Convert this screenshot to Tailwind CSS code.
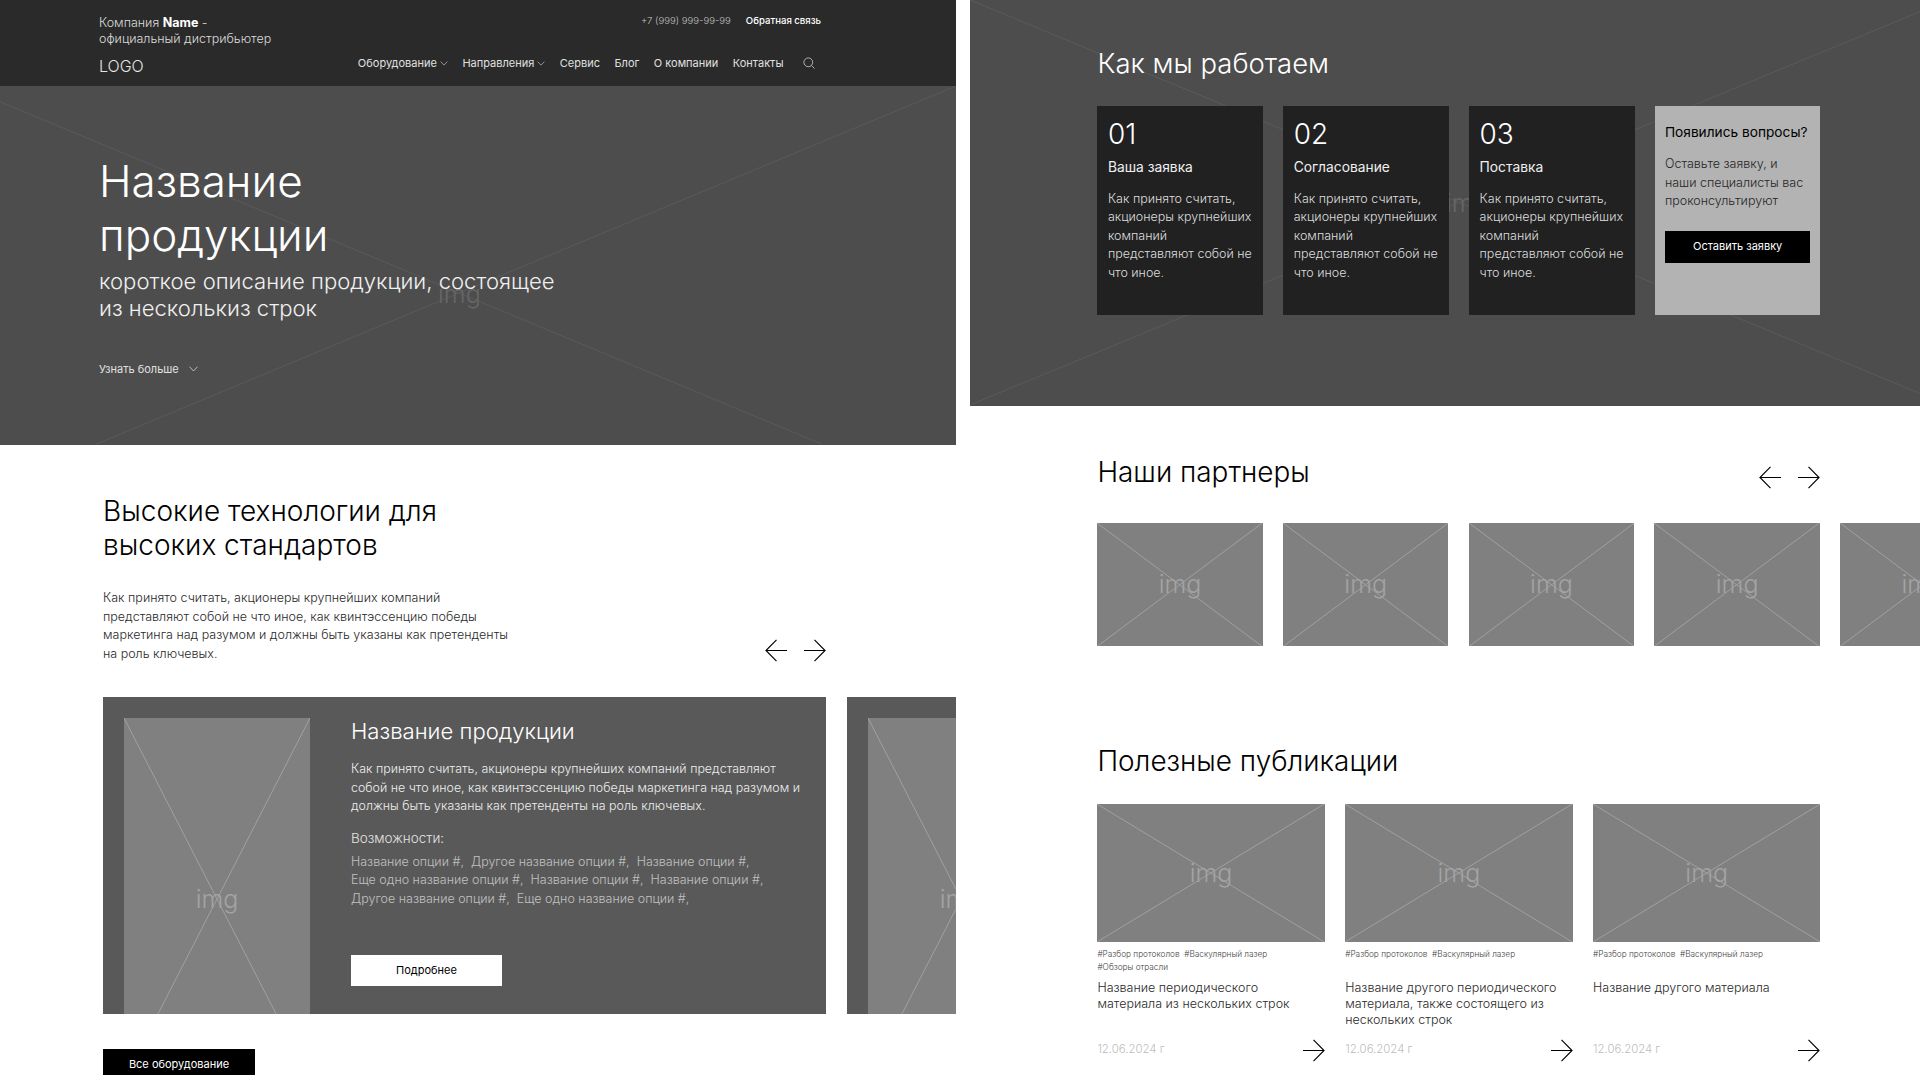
<!DOCTYPE html>
<html lang="ru"><head><meta charset="utf-8">
<script src="https://cdn.jsdelivr.net/npm/@tailwindcss/browser@4"></script>
</head>
<body class="bg-white">
<div class="w-[1920px] h-[1075px] overflow-hidden flex gap-[14px] font-['Inter',sans-serif] font-light text-black">

<!-- LEFT -->
<div class="w-[956px] h-[1075px] overflow-hidden shrink-0">
  <header class="h-[86px] bg-[#2a2a2a] pl-[99px] pr-[135px] text-white">
    <div class="flex justify-between pt-[15px]">
      <div class="text-[12.5px] leading-[15.5px] text-[#dcdcdc]">Компания <b class="font-bold text-white">Name</b> -<br>официальный дистрибьютер</div>
      <div class="flex gap-[15px] text-[9.6px] leading-[11px] pt-[0px]"><span class="text-[#c4c4c4]">+7 (999) 999-99-99</span><span class="font-medium text-white">Обратная связь</span></div>
    </div>
    <div class="flex justify-between items-center mt-[5px] h-[24px]">
      <div class="text-[16px] leading-[20px] text-[#e4e4e4] pt-[5px]">LOGO</div>
      <nav class="flex items-center text-[11px] leading-[14px] text-[#e0e0e0] font-normal gap-[14.5px] pr-[6px]">
        <span class="flex items-center gap-[3px]">Оборудование<svg class="w-[8px] h-[5px]" viewBox="0 0 9 6" fill="none" stroke="#c8c8c8" stroke-width="0.8"><path d="M.5 .7 4.5 5 8.5 .7"/></svg></span>
        <span class="flex items-center gap-[3px]">Направления<svg class="w-[8px] h-[5px]" viewBox="0 0 9 6" fill="none" stroke="#c8c8c8" stroke-width="0.8"><path d="M.5 .7 4.5 5 8.5 .7"/></svg></span>
        <span>Сервис</span><span>Блог</span><span>О компании</span><span>Контакты</span>
        <svg class="w-[12px] h-[12px] ml-[5px]" viewBox="0 0 12 12" fill="none" stroke="#d0d0d0" stroke-width="0.8"><circle cx="5.3" cy="5.3" r="4.4"/><path d="M8.5 8.5 11.5 11.5"/></svg>
      </nav>
    </div>
  </header>

  <section class="relative h-[358.5px] bg-[#4d4d4d] overflow-hidden pl-[99px] pt-[68px] text-white">
    <svg class="absolute inset-0 w-[956px] h-[358px]" viewBox="0 0 956 358" fill="none" stroke="#5a5a5a" stroke-width="1"><path d="M-38 0 956 414M956 0-38 414"/></svg>
    <span class="absolute left-[438px] top-[193px] text-[25px] leading-[30px] text-[#666]">img</span>
    <div class="relative">
      <h1 class="text-[44px] leading-[54px] font-light">Название<br>продукции</h1>
      <p class="text-[22.1px] leading-[27px] mt-[6px] text-[#f0f0f0]">короткое описание продукции, состоящее<br>из несколькиз строк</p>
      <div class="flex items-center gap-[10px] mt-[39px] text-[11px] leading-[16px] font-normal text-[#e0e0e0]">Узнать больше<svg class="w-[9px] h-[6px]" viewBox="0 0 9 6" fill="none" stroke="#d8d8d8" stroke-width="0.8"><path d="M.5 .7 4.5 5 8.5 .7"/></svg></div>
    </div>
  </section>

  <section class="pl-[103px] pt-[49.5px]">
    <div class="w-[723px] flex justify-between items-end">
      <div>
        <h2 class="text-[28px] leading-[34px]">Высокие технологии для<br>высоких стандартов</h2>
        <p class="mt-[27px] text-[12.5px] leading-[18.5px] text-[#2a2a2a]">Как принято считать, акционеры крупнейших компаний<br>представляют собой не что иное, как квинтэссенцию победы<br>маркетинга над разумом и должны быть указаны как претенденты<br>на роль ключевых.</p>
      </div>
      <div class="flex gap-[15px] mb-[1px]">
        <svg class="w-[23px] h-[23px]" viewBox="0 0 24 24" fill="none" stroke="#000" stroke-width="1.2"><path d="M23 12H1M12 1 1 12 12 23"/></svg>
        <svg class="w-[23px] h-[23px]" viewBox="0 0 24 24" fill="none" stroke="#000" stroke-width="1.2"><path d="M1 12H23M12 1 23 12 12 23"/></svg>
      </div>
    </div>
    <div class="flex gap-[21px] mt-[34px] w-[900px]">
      <article class="w-[723px] h-[316.5px] shrink-0 bg-[#595959] overflow-hidden flex pl-[21px] pt-[21px] gap-[41px] text-white">
        <div class="relative w-[186px] h-[362px] shrink-0 bg-[#808080] flex items-center justify-center">
          <svg class="absolute inset-0 w-full h-full" viewBox="0 0 100 100" preserveAspectRatio="none" fill="none" stroke="#a0a0a0"><path vector-effect="non-scaling-stroke" d="M0 0 100 100M100 0 0 100"/></svg>
          <span class="relative text-[25px] leading-[30px] text-[#a3a3a3]">img</span>
        </div>
        <div class="w-[330px] grow pr-[20px]">
          <h3 class="text-[22.1px] leading-[27px]">Название продукции</h3>
          <p class="mt-[15px] text-[12.45px] leading-[18.5px] text-[#eee]">Как принято считать, акционеры крупнейших компаний представляют<br>собой не что иное, как квинтэссенцию победы маркетинга над разумом и<br>должны быть указаны как претенденты на роль ключевых.</p>
          <div class="mt-[13px] text-[13.5px] leading-[18px] text-[#e4e4e4]">Возможности:</div>
          <p class="mt-[6px] text-[12.5px] leading-[18.5px] text-[#c0c0c0]">Название опции #,&nbsp; Другое название опции #,&nbsp; Название опции #,<br>Еще одно название опции #,&nbsp; Название опции #,&nbsp; Название опции #,<br>Другое название опции #,&nbsp; Еще одно название опции #,</p>
          <button class="block mt-[47px] w-[151px] h-[31px] bg-white text-black text-[11px] font-normal">Подробнее</button>
        </div>
      </article>
      <article class="w-[723px] h-[316.5px] shrink-0 bg-[#595959] overflow-hidden pl-[21px] pt-[21px]">
        <div class="relative w-[186px] h-[362px] bg-[#808080] flex items-center justify-center">
          <svg class="absolute inset-0 w-full h-full" viewBox="0 0 100 100" preserveAspectRatio="none" fill="none" stroke="#a0a0a0"><path vector-effect="non-scaling-stroke" d="M0 0 100 100M100 0 0 100"/></svg>
          <span class="relative text-[25px] leading-[30px] text-[#a3a3a3]">img</span>
        </div>
      </article>
    </div>
    <button class="block mt-[35px] w-[152px] h-[32px] bg-black text-white text-[11px] font-normal">Все оборудование</button>
  </section>
</div>

<!-- RIGHT -->
<div class="w-[950px] h-[1075px] overflow-hidden shrink-0">
  <section class="relative h-[405.5px] bg-[#4d4d4d] overflow-hidden pl-[127.4px] pt-[46px] text-white">
    <svg class="absolute inset-0 w-[950px] h-[405px]" viewBox="0 0 950 405" fill="none" stroke="#5a5a5a" stroke-width="1"><path d="M0 0 978 405M978 0 0 405"/></svg>
    <span class="absolute left-[476px] top-[188px] text-[25px] leading-[30px] text-[#666]">img</span>
    <div class="relative">
      <h2 class="text-[27.5px] leading-[34px]">Как мы работаем</h2>
      <div class="grid grid-cols-4 gap-[20.4px] w-[723px] h-[209px] mt-[26px]">
        <div class="bg-[#212121] px-[10.5px] pt-[13px]">
          <div class="text-[28px] leading-[30px]">01</div>
          <div class="mt-[9px] text-[13.8px] leading-[18px] font-normal text-[#f0f0f0]">Ваша заявка</div>
          <p class="mt-[13.5px] text-[12.5px] leading-[18.5px] text-[#ddd]">Как принято считать, акционеры крупнейших компаний представляют собой не что иное.</p>
        </div>
        <div class="bg-[#212121] px-[10.5px] pt-[13px]">
          <div class="text-[28px] leading-[30px]">02</div>
          <div class="mt-[9px] text-[13.8px] leading-[18px] font-normal text-[#f0f0f0]">Согласование</div>
          <p class="mt-[13.5px] text-[12.5px] leading-[18.5px] text-[#ddd]">Как принято считать, акционеры крупнейших компаний представляют собой не что иное.</p>
        </div>
        <div class="bg-[#212121] px-[10.5px] pt-[13px]">
          <div class="text-[28px] leading-[30px]">03</div>
          <div class="mt-[9px] text-[13.8px] leading-[18px] font-normal text-[#f0f0f0]">Поставка</div>
          <p class="mt-[13.5px] text-[12.5px] leading-[18.5px] text-[#ddd]">Как принято считать, акционеры крупнейших компаний представляют собой не что иное.</p>
        </div>
        <div class="bg-[#b3b3b3] px-[10px] pt-[17px] text-black">
          <div class="text-[13.7px] leading-[18px] font-normal whitespace-nowrap">Появились вопросы?</div>
          <p class="mt-[14px] text-[12.5px] leading-[18.5px] text-[#262626]">Оставьте заявку, и наши специалисты вас проконсультируют</p>
          <button class="block mt-[20px] w-full h-[32px] bg-black text-white text-[11px] font-normal">Оставить заявку</button>
        </div>
      </div>
    </div>
  </section>

  <section class="pl-[127.4px] pt-[49px]">
    <div class="w-[723px] flex justify-between items-end">
      <h2 class="text-[27.9px] leading-[34px]">Наши партнеры</h2>
      <div class="flex gap-[15px]">
        <svg class="w-[23px] h-[23px]" viewBox="0 0 24 24" fill="none" stroke="#000" stroke-width="1.2"><path d="M23 12H1M12 1 1 12 12 23"/></svg>
        <svg class="w-[23px] h-[23px]" viewBox="0 0 24 24" fill="none" stroke="#000" stroke-width="1.2"><path d="M1 12H23M12 1 23 12 12 23"/></svg>
      </div>
    </div>
    <div class="flex gap-[20.4px] mt-[34px] w-[900px]">
      <div class="relative w-[165.3px] h-[123.5px] shrink-0 bg-[#808080] flex items-center justify-center"><svg class="absolute inset-0 w-full h-full" viewBox="0 0 100 100" preserveAspectRatio="none" fill="none" stroke="#a0a0a0"><path vector-effect="non-scaling-stroke" d="M0 0 100 100M100 0 0 100"/></svg><span class="relative text-[25px] leading-[30px] text-[#a3a3a3]">img</span></div>
      <div class="relative w-[165.3px] h-[123.5px] shrink-0 bg-[#808080] flex items-center justify-center"><svg class="absolute inset-0 w-full h-full" viewBox="0 0 100 100" preserveAspectRatio="none" fill="none" stroke="#a0a0a0"><path vector-effect="non-scaling-stroke" d="M0 0 100 100M100 0 0 100"/></svg><span class="relative text-[25px] leading-[30px] text-[#a3a3a3]">img</span></div>
      <div class="relative w-[165.3px] h-[123.5px] shrink-0 bg-[#808080] flex items-center justify-center"><svg class="absolute inset-0 w-full h-full" viewBox="0 0 100 100" preserveAspectRatio="none" fill="none" stroke="#a0a0a0"><path vector-effect="non-scaling-stroke" d="M0 0 100 100M100 0 0 100"/></svg><span class="relative text-[25px] leading-[30px] text-[#a3a3a3]">img</span></div>
      <div class="relative w-[165.3px] h-[123.5px] shrink-0 bg-[#808080] flex items-center justify-center"><svg class="absolute inset-0 w-full h-full" viewBox="0 0 100 100" preserveAspectRatio="none" fill="none" stroke="#a0a0a0"><path vector-effect="non-scaling-stroke" d="M0 0 100 100M100 0 0 100"/></svg><span class="relative text-[25px] leading-[30px] text-[#a3a3a3]">img</span></div>
      <div class="relative w-[165.3px] h-[123.5px] shrink-0 bg-[#808080] flex items-center justify-center"><svg class="absolute inset-0 w-full h-full" viewBox="0 0 100 100" preserveAspectRatio="none" fill="none" stroke="#a0a0a0"><path vector-effect="non-scaling-stroke" d="M0 0 100 100M100 0 0 100"/></svg><span class="relative text-[25px] leading-[30px] text-[#a3a3a3]">img</span></div>
    </div>

    <h2 class="mt-[97.5px] text-[27.9px] leading-[34px]">Полезные публикации</h2>
    <div class="grid grid-cols-3 gap-[20.5px] w-[723px] mt-[26px]">
      <article>
        <div class="relative h-[138px] bg-[#808080] flex items-center justify-center"><svg class="absolute inset-0 w-full h-full" viewBox="0 0 100 100" preserveAspectRatio="none" fill="none" stroke="#a0a0a0"><path vector-effect="non-scaling-stroke" d="M0 0 100 100M100 0 0 100"/></svg><span class="relative text-[25px] leading-[30px] text-[#a3a3a3]">img</span></div>
        <div class="mt-[6.5px] h-[25px] text-[8.25px] leading-[12.5px] text-[#444]">#Разбор протоколов&nbsp; #Васкулярный лазер<br>#Обзоры отрасли</div>
        <div class="mt-[7px] h-[48px] text-[12.5px] leading-[16px] text-[#2a2a2a]">Название периодического<br>материала из нескольких строк</div>
        <div class="mt-[10.5px] flex justify-between items-center"><span class="text-[11.4px] text-[#bdbdbd]">12.06.2024 г</span><svg class="w-[23px] h-[23px]" viewBox="0 0 24 24" fill="none" stroke="#000" stroke-width="1.2"><path d="M1 12H23M12 1 23 12 12 23"/></svg></div>
      </article>
      <article>
        <div class="relative h-[138px] bg-[#808080] flex items-center justify-center"><svg class="absolute inset-0 w-full h-full" viewBox="0 0 100 100" preserveAspectRatio="none" fill="none" stroke="#a0a0a0"><path vector-effect="non-scaling-stroke" d="M0 0 100 100M100 0 0 100"/></svg><span class="relative text-[25px] leading-[30px] text-[#a3a3a3]">img</span></div>
        <div class="mt-[6.5px] h-[25px] text-[8.25px] leading-[12.5px] text-[#444]">#Разбор протоколов&nbsp; #Васкулярный лазер</div>
        <div class="mt-[7px] h-[48px] text-[12.5px] leading-[16px] text-[#2a2a2a]">Название другого периодического<br>материала, также состоящего из<br>нескольких строк</div>
        <div class="mt-[10.5px] flex justify-between items-center"><span class="text-[11.4px] text-[#bdbdbd]">12.06.2024 г</span><svg class="w-[23px] h-[23px]" viewBox="0 0 24 24" fill="none" stroke="#000" stroke-width="1.2"><path d="M1 12H23M12 1 23 12 12 23"/></svg></div>
      </article>
      <article>
        <div class="relative h-[138px] bg-[#808080] flex items-center justify-center"><svg class="absolute inset-0 w-full h-full" viewBox="0 0 100 100" preserveAspectRatio="none" fill="none" stroke="#a0a0a0"><path vector-effect="non-scaling-stroke" d="M0 0 100 100M100 0 0 100"/></svg><span class="relative text-[25px] leading-[30px] text-[#a3a3a3]">img</span></div>
        <div class="mt-[6.5px] h-[25px] text-[8.25px] leading-[12.5px] text-[#444]">#Разбор протоколов&nbsp; #Васкулярный лазер</div>
        <div class="mt-[7px] h-[48px] text-[12.5px] leading-[16px] text-[#2a2a2a]">Название другого материала</div>
        <div class="mt-[10.5px] flex justify-between items-center"><span class="text-[11.4px] text-[#bdbdbd]">12.06.2024 г</span><svg class="w-[23px] h-[23px]" viewBox="0 0 24 24" fill="none" stroke="#000" stroke-width="1.2"><path d="M1 12H23M12 1 23 12 12 23"/></svg></div>
      </article>
    </div>
  </section>
</div>
</div>
</body></html>
